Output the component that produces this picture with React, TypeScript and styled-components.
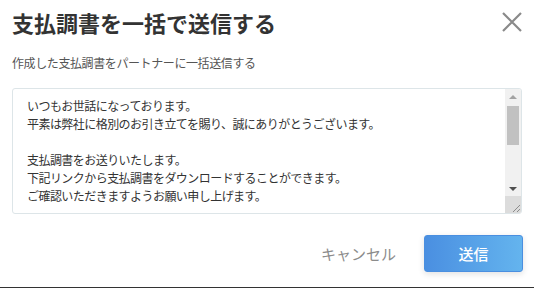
import { createGlobalStyle, styled } from 'styled-components';

const GlobalStyle = createGlobalStyle`
	html, body {
		margin: 0;
		padding: 0;
		background: #ffffff;
	}
	body {
		font-family: 'Noto Sans CJK JP', 'Noto Sans', sans-serif;
		color: #333333;
	}
`;

const Dialog = styled.div`
	box-sizing: border-box;
	width: 534px;
	height: 288px;
	padding: 10px 12px 0;
	background: #ffffff;
	border-bottom: 1px solid #333333;
	display: flex;
	flex-direction: column;
`;

const Header = styled.div`
	display: flex;
	align-items: center;
	justify-content: space-between;
	height: 24px;
`;

const Title = styled.h1`
	margin: 0;
	font-size: 22px;
	line-height: 24px;
	font-weight: 700;
	color: #333333;
`;

const CloseButton = styled.button`
	border: 0;
	padding: 0;
	background: none;
	width: 20px;
	height: 20px;
	display: flex;
	cursor: pointer;
`;

const Lead = styled.p`
	margin: 21px 0 0;
	font-size: 12px;
	line-height: 16px;
	letter-spacing: -0.4px;
	color: #555555;
`;

const MessageBox = styled.div`
	box-sizing: border-box;
	margin-top: 17px;
	height: 126px;
	border: 1px solid #dde5e8;
	border-radius: 3px;
	display: flex;
	overflow: hidden;
`;

const MessageText = styled.div`
	flex: 1;
	padding: 8px 14px;
	font-size: 12px;
	line-height: 18px;
	letter-spacing: -0.55px;
	color: #333333;
	white-space: pre-wrap;
`;

const ScrollBar = styled.div`
	width: 16px;
	display: flex;
	flex-direction: column;
	background: #f1f1f1;
`;

const ArrowCell = styled.div`
	height: 15px;
	display: flex;
	align-items: center;
	justify-content: center;
`;

const Arrow = styled.span<{ $down?: boolean; $dim?: boolean }>`
	width: 0;
	height: 0;
	border-left: 4px solid transparent;
	border-right: 4px solid transparent;
	${p =>
		p.$down
			? `border-top: 4px solid ${p.$dim ? '#a3a3a3' : '#505050'};`
			: `border-bottom: 4px solid ${p.$dim ? '#a3a3a3' : '#505050'};`}
`;

const Track = styled.div`
	flex: 1;
	padding: 2px 2px 0;
`;

const Thumb = styled.div`
	height: 39px;
	background: #c1c1c1;
`;

const Resizer = styled.div`
	height: 17px;
	background: #dcdcdc;
	display: flex;
	align-items: flex-end;
	justify-content: flex-end;
`;

const Footer = styled.div`
	margin-top: 21px;
	margin-right: -1px;
	display: flex;
	align-items: center;
	justify-content: flex-end;
	gap: 28px;
`;

const CancelButton = styled.button`
	border: 0;
	background: none;
	padding: 0;
	font-family: inherit;
	font-size: 15px;
	line-height: 20px;
	color: #8c8c8c;
	cursor: pointer;
`;

const SendButton = styled.button`
	width: 99px;
	height: 37px;
	border: 1px solid #4a8fe0;
	border-radius: 3px;
	background: linear-gradient(90deg, #4a8fe1 0%, #64b4ee 100%);
	box-shadow: 0 2px 6px rgba(0, 0, 0, 0.12);
	color: #ffffff;
	font-family: inherit;
	font-size: 15px;
	font-weight: 500;
	cursor: pointer;
`;

const message = `いつもお世話になっております。
平素は弊社に格別のお引き立てを賜り、誠にありがとうございます。

支払調書をお送りいたします。
下記リンクから支払調書をダウンロードすることができます。
ご確認いただきますようお願い申し上げます。`;

export default function App() {
	return (
		<>
			<GlobalStyle />
			<Dialog>
				<Header>
					<Title>支払調書を一括で送信する</Title>
					<CloseButton aria-label="閉じる">
						<svg width="20" height="20" viewBox="0 0 20 20">
							<path
								d="M1 1 L19 19 M19 1 L1 19"
								stroke="#8a8a8a"
								strokeWidth="2.2"
								fill="none"
							/>
						</svg>
					</CloseButton>
				</Header>
				<Lead>作成した支払調書をパートナーに一括送信する</Lead>
				<MessageBox>
					<MessageText>{message}</MessageText>
					<ScrollBar>
						<ArrowCell>
							<Arrow $dim />
						</ArrowCell>
						<Track>
							<Thumb />
						</Track>
						<ArrowCell>
							<Arrow $down />
						</ArrowCell>
						<Resizer>
							<svg width="10" height="10" viewBox="0 0 10 10">
								<path d="M9 2 L2 9 M9 6 L6 9" stroke="#8c8c8c" strokeWidth="1" />
							</svg>
						</Resizer>
					</ScrollBar>
				</MessageBox>
				<Footer>
					<CancelButton>キャンセル</CancelButton>
					<SendButton>送信</SendButton>
				</Footer>
			</Dialog>
		</>
	);
}
